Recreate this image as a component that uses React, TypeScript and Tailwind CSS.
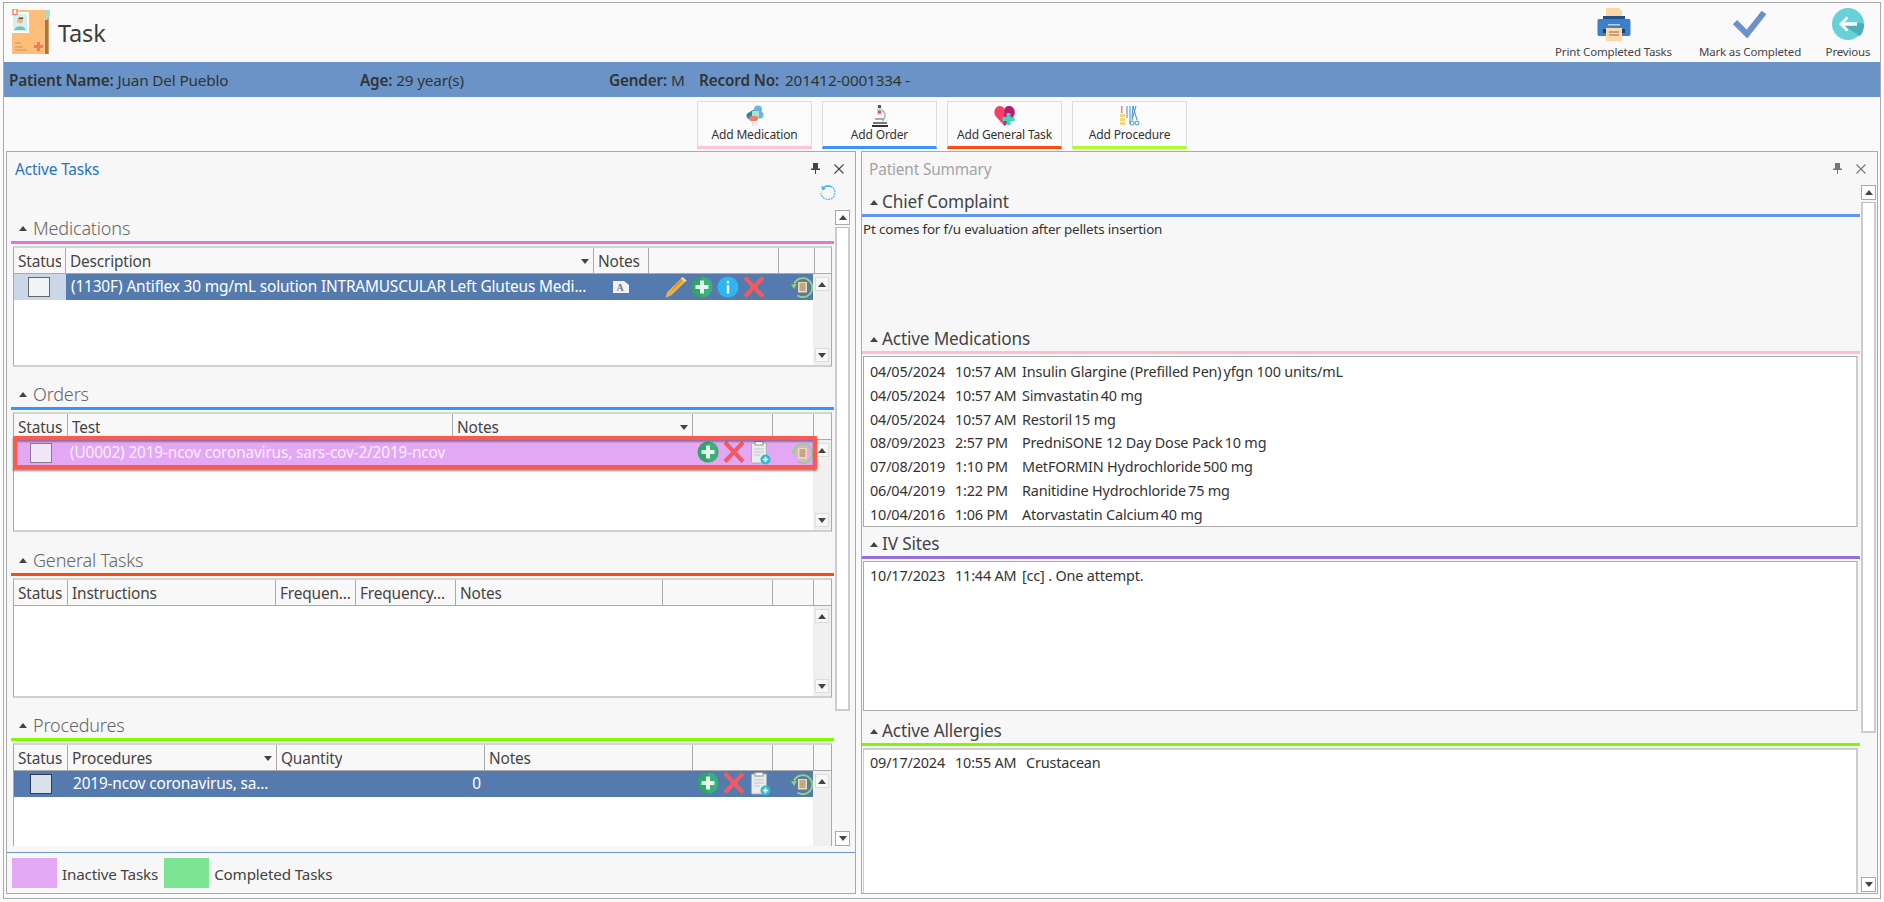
import React from 'react';

const Caret = ({ up = false }: { up?: boolean }) => (
  <svg width="8" height="5" viewBox="0 0 8 5" className="shrink-0">
    <path d={up ? 'M0 5 L4 0 L8 5 Z' : 'M0 0 L8 0 L4 5 Z'} fill="#444" />
  </svg>
);

const Plus = () => (
  <svg width="22" height="22" viewBox="0 0 22 22" className="shrink-0">
    <circle cx="11" cy="11" r="10.5" fill="#2fa56a" />
    <path d="M11 .5a10.5 10.5 0 0 1 0 21z" fill="#3cb07a" />
    <path d="M9 4.5h4V9h4.5v4H13v4.5H9V13H4.5V9H9z" fill="#e6f5ec" />
  </svg>
);

const Cross = () => (
  <svg width="22" height="22" viewBox="0 0 22 22" className="shrink-0">
    <path d="M2 1.5 L20 20.5 M20 1.5 L2 20.5" stroke="#f25a63" strokeWidth="4" />
  </svg>
);

const Pencil = () => (
  <svg width="22" height="22" viewBox="0 0 22 22" className="shrink-0">
    <path d="M17.5 1 L21.5 4.5 L6 19.5 L2 16.5 Z" fill="#f5b63c" />
    <path d="M10 9 L16 3 L18 5 L4 18 Z" fill="#e59a22" />
    <path d="M17.5 1 L21.5 4.5 L20 6 L16 2.5 Z" fill="#f0d9a8" />
    <path d="M2 16.5 L6 19.5 L0.5 21.8 Z" fill="#d9b48a" />
  </svg>
);

const Info = () => (
  <svg width="22" height="22" viewBox="0 0 22 22" className="shrink-0">
    <circle cx="11" cy="11" r="10.5" fill="#2fb5ef" />
    <rect x="9.8" y="9" width="2.4" height="8.5" fill="#fff" />
    <rect x="9.8" y="4.8" width="2.4" height="2.6" fill="#fff" />
  </svg>
);

const Clipboard = () => (
  <svg width="22" height="24" viewBox="0 0 22 24" className="shrink-0">
    <rect x="2.5" y="2" width="15" height="20" rx="1" fill="#e9ebec" stroke="#aab0b4" />
    <rect x="6" y="0.5" width="8" height="3.5" fill="#fff" stroke="#8f969a" />
    <path d="M5 8h10M5 11h10M5 14h6" stroke="#c3c8cb" strokeWidth="1.2" />
    <circle cx="16.5" cy="18.5" r="5" fill="#2fbdc5" />
    <path d="M16.5 15.8v5.4M13.8 18.5h5.4" stroke="#fff" strokeWidth="1.6" />
  </svg>
);

const History = () => (
  <svg width="22" height="22" viewBox="0 0 22 22" className="shrink-0">
    <path d="M3.2 7.5 A9.5 9.5 0 1 1 6.5 19.5" fill="none" stroke="#93d671" strokeWidth="1.8" />
    <path d="M0 8.5 L5.5 8 L3.2 13 Z" fill="#93d671" />
    <rect x="7" y="6" width="9" height="10.5" fill="#f2d9ae" />
    <path d="M8.5 8h6M8.5 10h6M8.5 12h6M8.5 14h6" stroke="#8c7a5a" strokeWidth="1" />
  </svg>
);

const NoteA = () => (
  <svg width="16" height="12" viewBox="0 0 16 12">
    <path d="M0 0 H11 L16 4 V12 H0 Z" fill="#f1f2f4" />
    <text x="7" y="10" textAnchor="middle" fontSize="10" fontFamily="Liberation Serif, serif" fontWeight="700" fill="#6d7a8c">A</text>
  </svg>
);

const Pin = ({ color }: { color: string }) => (
  <svg width="9" height="11" viewBox="0 0 9 11">
    <path d="M2 0h5v5.5h2V7H5v4H4V7H0V5.5h2z" fill={color} />
  </svg>
);

const Close = ({ color }: { color: string }) => (
  <svg width="10" height="10" viewBox="0 0 10 10">
    <path d="M.5 .5 L9.5 9.5 M9.5 .5 L.5 9.5" stroke={color} strokeWidth="1.1" />
  </svg>
);

const Refresh = () => (
  <svg width="16" height="16" viewBox="0 0 16 16">
    <path d="M3 2.6 A7 7 0 1 1 1 8" fill="none" stroke="#47b8ee" strokeWidth="1.2" strokeDasharray="2 .8" />
    <path d="M3.2 3 A7 7 0 0 1 11 2" fill="none" stroke="#47b8ee" strokeWidth="1.3" />
    <path d="M1.2 .8 L2 5.4 L6 3.8 Z" fill="#47b8ee" />
  </svg>
);

const TaskIcon = () => (
  <svg width="41" height="47" viewBox="0 0 41 47" className="shrink-0">
    <rect x="1" y="1" width="37" height="44" fill="#fcbe78" />
    <rect x="34" y="8" width="3.5" height="37" fill="#a8764a" />
    <path d="M34 1 H39 V7 L36 11 H34 Z" fill="#a2dcd8" />
    <rect x="0" y="3" width="18" height="21" fill="#fdfdfc" />
    <rect x="2" y="5" width="14" height="17" fill="#d5f0ee" />
    <circle cx="9" cy="11.5" r="3" fill="#e9b58a" />
    <path d="M8 8.5h4l.5 1.5h-5z" fill="#6a4a30" />
    <path d="M3.5 21 C4 16 14 16 14.5 21 Z" fill="#72c3c0" />
    <rect x="2" y="0" width="4" height="5.5" fill="#fff" stroke="#f0705a" strokeWidth="1.2" />
    <path d="M23 36 h3 v-3 h3 v3 h3 v3 h-3 v3 h-3 v-3 h-3 z" fill="#f47a5a" />
    <path d="M4 34h6M4 38h8M4 41h12" stroke="#c8985f" strokeWidth="1" />
  </svg>
);

const PrintIcon = () => (
  <svg width="34" height="33" viewBox="0 0 34 33">
    <path d="M9 0 H22 L25 3 V10 H9 Z" fill="#fdd7a8" />
    <rect x="6" y="8" width="22" height="5" fill="#1f5288" />
    <path d="M2 11 H32 Q33.5 11 33.5 13 V26 Q33.5 28 32 28 H2 Q.5 28 .5 26 V13 Q.5 11 2 11 Z" fill="#3f7fc6" />
    <rect x="6" y="21" width="22" height="4" fill="#1f3f66" />
    <rect x="11" y="16" width="12" height="1.5" fill="#b9d4ee" />
    <rect x="9" y="20" width="16" height="13" fill="#fdd7a8" />
    <path d="M12 24h10M12 27h10" stroke="#8a6a48" strokeWidth="1" />
  </svg>
);

const CheckIcon = () => (
  <svg width="34" height="28" viewBox="0 0 34 28">
    <path d="M2 12 L14 24 L31 2.5" fill="none" stroke="#6a92c9" strokeWidth="6" />
  </svg>
);

const BackIcon = () => (
  <svg width="32" height="32" viewBox="0 0 32 32">
    <circle cx="16" cy="16" r="16" fill="#68d0d9" />
    <path d="M9 16 L17 21 L28 28 A16 16 0 0 0 32 16 L29 15 H23 Z" fill="#4aafb9" />
    <path d="M14.5 8.5 L7 16 L14.5 23.5 L16.5 21.5 L12.5 17.8 H25 V14.2 H12.5 L16.5 10.5 Z" fill="#fff" />
  </svg>
);

const MedIcon = () => (
  <svg width="22" height="22" viewBox="0 0 22 22">
    <rect x="2" y="6" width="12" height="7" rx="3.5" fill="#2a8a98" transform="rotate(-30 8 9)" />
    <circle cx="14" cy="4.5" r="4" fill="#6eb2e6" />
    <circle cx="16" cy="10" r="3.5" fill="#6eb2e6" />
    <rect x="8" y="6" width="7" height="6" fill="#a8e0d6" />
    <rect x="5" y="11" width="9" height="5" rx="2.5" fill="#ee7d62" />
    <path d="M9 17v4M12 18v2" stroke="#c9c9c9" />
  </svg>
);

const MicroscopeIcon = () => (
  <svg width="16" height="22" viewBox="0 0 16 22">
    <rect x="6" y="0" width="3" height="4" fill="#555" />
    <rect x="5" y="3" width="5" height="7" fill="#d8d8d8" />
    <circle cx="7.5" cy="7" r="1.8" fill="#e05a4e" />
    <path d="M10 5 A6.5 6.5 0 0 1 10 16" fill="none" stroke="#b8b8b8" strokeWidth="1.5" />
    <rect x="3" y="13" width="9" height="2" fill="#aaa" />
    <rect x="1" y="17" width="14" height="2" fill="#777" />
    <rect x="0" y="20" width="16" height="2" fill="#333" />
  </svg>
);

const HeartIcon = () => (
  <svg width="21" height="21" viewBox="0 0 21 21">
    <path d="M10.5 20 L1.5 10 C-1.5 5 2 0 6 0 C8 0 9.5 1 10.5 3 C11.5 1 13 0 15 0 C19 0 22.5 5 19.5 10 Z" fill="#f4416c" />
    <path d="M10.5 3 C11.5 1 13 0 15 0 C19 0 22.5 5 19.5 10 L10.5 20 Z" fill="#b81e6e" />
    <path d="M12.5 7h4v4h4v4h-4v4h-4v-4h-4v-4h4z" fill="#3fd6c4" />
  </svg>
);

const ProcedureIcon = () => (
  <svg width="20" height="21" viewBox="0 0 20 21">
    <rect x="1" y="0" width="1.5" height="7" fill="#f0818a" />
    <rect x="0" y="8" width="5" height="3" fill="#f4d67a" />
    <rect x="0" y="12" width="5" height="3" fill="#f4d67a" />
    <rect x="0" y="16" width="5" height="3" fill="#f4d67a" />
    <path d="M7 0v12M10 0v18M13 0l-1 12" stroke="#3f8fd0" strokeWidth="1" fill="none" />
    <path d="M16 0 L12 14 M13 0 L17 14" stroke="#3f8fd0" strokeWidth="1" />
    <circle cx="12" cy="17" r="2" fill="none" stroke="#3f8fd0" />
    <circle cx="17" cy="17" r="2" fill="none" stroke="#3f8fd0" />
  </svg>
);

const ScrollBtn = ({ up, cls }: { up?: boolean; cls: string }) => (
  <div className={`flex shrink-0 items-center justify-center ${cls}`}>
    <Caret up={up} />
  </div>
);

// scrollbar that sits inside each grid body
const GridScroll = () => (
  <div className="flex w-[18px] shrink-0 flex-col items-center justify-between bg-[#f0f0f0] px-[2px] py-[3px]">
    <ScrollBtn up cls="h-[14px] w-[14px] border border-[#dcdcdc] bg-[#f7f7f7]" />
    <ScrollBtn cls="h-[14px] w-[14px] border border-[#dcdcdc] bg-[#f7f7f7]" />
  </div>
);

type Col = { label?: string; w: string; sort?: boolean };

const Grid = ({ cols, h, children }: { cols: Col[]; h: string; children?: React.ReactNode }) => (
  <div className={`flex flex-col border-x border-t-2 border-b-2 border-x-[#aaa] border-t-[#d4d4d4] border-b-[#d0d0d0] ${h}`}>
    <div className="flex h-[26px] shrink-0 border-b border-[#aaa] bg-[#f8f8f8] text-[15.4px] text-[#444]">
      {cols.map((c, i) => (
        <div key={i} className={`flex items-center justify-between border-r border-[#aaa] pl-[4px] pr-[4px] pt-[2px] last:border-r-0 ${c.w}`}>
          <span className="overflow-hidden whitespace-nowrap">{c.label}</span>
          {c.sort && <Caret />}
        </div>
      ))}
    </div>
    <div className="flex min-h-0 flex-1 bg-white">
      <div className="relative min-w-0 flex-1">{children}</div>
      <GridScroll />
    </div>
  </div>
);

const Checkbox = ({ cls }: { cls: string }) => <div className={`h-[20px] w-[22px] border ${cls}`} />;

const Heading = ({ text, tone, line, size, gap }: { text: string; tone: string; line: string; size: string; gap: string }) => (
  <>
    <div className={`flex h-[26px] items-center pl-[8px] pt-[2px] leading-none ${tone} ${size}`}>
      <span className={`inline-flex ${gap}`}>
        <Caret up />
      </span>
      {text}
    </div>
    <div className={`h-[3px] ${line}`} />
  </>
);

const PanelTitle = ({ text, tone, iconTone, right, left }: { text: string; tone: string; iconTone: string; right: string; left: string }) => (
  <div className={`flex h-[33px] shrink-0 items-center justify-between ${left} ${right}`}>
    <span className={`pt-[2px] text-[15.4px] ${tone}`}>{text}</span>
    <div className="flex items-center gap-[14px]">
      <Pin color={iconTone} />
      <Close color={iconTone} />
    </div>
  </div>
);

const OuterScroll = ({ cls, thumb }: { cls: string; thumb: string }) => (
  <div className={`flex w-[15px] shrink-0 flex-col ${cls}`}>
    <ScrollBtn up cls="h-[15px] border border-[#aaa] bg-white" />
    <div className={`mt-[2px] border-x-2 border-b-2 border-t border-x-[#ccc] border-b-[#ccc] border-t-[#bbb] bg-white ${thumb}`} />
    <div className="flex-1" />
    <ScrollBtn cls="h-[15px] border border-[#aaa] bg-white" />
  </div>
);

const SummaryRow = ({ date, time, name, dose }: { date: string; time: string; name: string; dose?: string }) => (
  <div className="flex h-[23.8px] items-center pl-[6px]">
    <span className="w-[85px]">{date}</span>
    <span className="w-[67px]">{time}</span>
    <span>{name}</span>
    {dose && <span className="ml-[2px]">{dose}</span>}
  </div>
);

const medications = [
  ['04/05/2024', '10:57 AM', 'Insulin Glargine (Prefilled Pen)', 'yfgn 100 units/mL'],
  ['04/05/2024', '10:57 AM', 'Simvastatin', '40 mg'],
  ['04/05/2024', '10:57 AM', 'Restoril', '15 mg'],
  ['08/09/2023', '2:57 PM', 'PredniSONE 12 Day Dose Pack', '10 mg'],
  ['07/08/2019', '1:10 PM', 'MetFORMIN Hydrochloride', '500 mg'],
  ['06/04/2019', '1:22 PM', 'Ranitidine Hydrochloride', '75 mg'],
  ['10/04/2016', '1:06 PM', 'Atorvastatin Calcium', '40 mg'],
];

const ToolButton = ({ label, line, icon }: { label: string; line: string; icon: React.ReactNode }) => (
  <div className={`flex h-[48px] w-[115px] flex-col items-center border-x border-t border-b-[3px] border-x-[#ddd] border-t-[#ddd] bg-[#fbfbfb] pt-[3px] ${line}`}>
    <div className="flex h-[22px] items-center justify-center">{icon}</div>
    <span className="mt-[1px] text-[12px] leading-[14px] text-[#333]">{label}</span>
  </div>
);

const HeaderAction = ({ label, w, icon }: { label: string; w: string; icon: React.ReactNode }) => (
  <div className={`flex flex-col items-center ${w}`}>
    <div className="flex h-[34px] items-center">{icon}</div>
    <span className="mt-[3px] whitespace-nowrap text-[11.5px] leading-[16px] text-[#444]">{label}</span>
  </div>
);

export default function App() {
  return (
    <div className="h-[902px] w-[1884px] overflow-hidden bg-[#fafafa] pl-[3px] pt-[2px] font-['Noto_Sans',sans-serif] tracking-[-0.01em] text-[#333]">
      <div className="flex h-[897px] w-[1878px] flex-col border border-[#aaa] bg-[#fafafa]">
        {/* Title bar */}
        <div className="flex h-[59px] shrink-0 items-start justify-between pl-[7px]">
          <div className="flex items-center pt-[6px]">
            <TaskIcon />
            <span className="ml-[6px] pt-[2px] text-[23.5px] leading-none text-[#3c3c3c]">Task</span>
          </div>
          <div className="flex pr-[7px] pt-[4px]">
            <HeaderAction label="Print Completed Tasks" w="w-[125px]" icon={<PrintIcon />} />
            <HeaderAction label="Mark as Completed" w="w-[118px] ml-[15px]" icon={<CheckIcon />} />
            <HeaderAction label="Previous" w="w-[50px] ml-[14px]" icon={<BackIcon />} />
          </div>
        </div>

        {/* Patient bar */}
        <div className="flex h-[35px] shrink-0 items-center bg-[#6a93c7] pt-[1px] text-[15.3px] text-[#333]">
          <div className="w-[356px] pl-[5px]"><b className="font-semibold">Patient Name:</b> Juan Del Pueblo</div>
          <div className="w-[249px]"><b className="font-semibold">Age:</b> 29 year(s)</div>
          <div className="w-[90px]"><b className="font-semibold">Gender:</b> M</div>
          <div><b className="font-semibold">Record No:</b><span className="ml-[6px]">201412-0001334 -</span></div>
        </div>

        {/* Add buttons */}
        <div className="flex h-[54px] shrink-0 justify-center gap-[10px] pt-[4px]">
          <ToolButton label="Add Medication" line="border-b-[#fcc5d0]" icon={<MedIcon />} />
          <ToolButton label="Add Order" line="border-b-[#3a94fa]" icon={<MicroscopeIcon />} />
          <ToolButton label="Add General Task" line="border-b-[#fb4d0f]" icon={<HeartIcon />} />
          <ToolButton label="Add Procedure" line="border-b-[#adfb2f]" icon={<ProcedureIcon />} />
        </div>

        <div className="flex min-h-0 flex-1 gap-[5px] pb-[4px] pl-[2px]">
          {/* Active Tasks */}
          <div className="flex w-[850px] shrink-0 flex-col border border-[#aaa] bg-[#f7f7f7]">
            <PanelTitle text="Active Tasks" tone="text-[#1f73c4]" iconTone="#444" left="pl-[8px]" right="pr-[11px]" />
            <div className="flex h-[16px] shrink-0 justify-end pr-[19px]"><Refresh /></div>
            <div className="flex min-h-0 flex-1 pl-[4px] pr-[5px]">
              <div className="flex min-w-0 flex-1 flex-col pt-[14px]">
                <div className="h-[166px] shrink-0">
                  <Heading text="Medications" tone="pb-[2px] text-[#666] font-light" size="text-[18px]" gap="mr-[6px]" line="bg-[#e077dd]" />
                  <div className="px-[2px] pt-[2px]">
                    <Grid
                      h="h-[121px]"
                      cols={[
                        { label: 'Status', w: 'w-[52px]' },
                        { label: 'Description', w: 'w-[528px]', sort: true },
                        { label: 'Notes', w: 'w-[55px]' },
                        { w: 'w-[130px]' },
                        { w: 'w-[36px]' },
                        { w: 'flex-1' },
                      ]}
                    >
                      <div className="flex h-[26px] items-center bg-[#557bae] text-[15.4px] text-white">
                        <div className="flex h-full w-[52px] items-center justify-center bg-[#c9d7e6] pr-[2px]">
                          <Checkbox cls="border-[#666] bg-[#f3f4f7]" />
                        </div>
                        <div className="w-[528px] overflow-hidden whitespace-nowrap pl-[5px]">(1130F) Antiflex 30 mg/mL solution INTRAMUSCULAR Left Gluteus Medi...</div>
                        <div className="flex w-[55px] justify-center"><NoteA /></div>
                        <div className="flex w-[130px] gap-[4px] pl-[17px]"><Pencil /><Plus /><Info /><Cross /></div>
                        <div className="w-[35px] pl-[13px]"><History /></div>
                      </div>
                    </Grid>
                  </div>
                </div>

                <div className="h-[166px] shrink-0">
                  <Heading text="Orders" tone="pb-[2px] text-[#666] font-light" size="text-[18px]" gap="mr-[6px]" line="bg-[#3a94fa]" />
                  <div className="px-[2px] pt-[2px]">
                    <Grid
                      h="h-[120px]"
                      cols={[
                        { label: 'Status', w: 'w-[54px]' },
                        { label: 'Test', w: 'w-[385px]' },
                        { label: 'Notes', w: 'w-[240px]', sort: true },
                        { w: 'w-[80px]' },
                        { w: 'w-[41px]' },
                        { w: 'flex-1' },
                      ]}
                    >
                      <div className="flex h-[26px] items-center bg-[#e3a8f3] text-[15.4px] text-[#fbeffd]">
                        <div className="flex w-[54px] justify-center">
                          <Checkbox cls="border-[#8d7b96] bg-[#f4e6f9]" />
                        </div>
                        <div className="w-[385px] overflow-hidden whitespace-nowrap pl-[2px]">(U0002) 2019-ncov coronavirus, sars-cov-2/2019-ncov</div>
                        <div className="w-[240px]" />
                        <div className="flex w-[80px] gap-[4px] pl-[4px]"><Plus /><Cross /><Clipboard /></div>
                        <div className="w-[40px] pl-[18px]"><History /></div>
                      </div>
                      {/* red selection box over the inactive row */}
                      <div className="absolute left-[-1px] top-[-4px] h-[33px] w-[804px] border-4 border-[#fb5a50] shadow-[0_2px_2px_rgba(0,0,0,0.45),inset_0_2px_2px_rgba(0,0,0,0.35)]" />
                    </Grid>
                  </div>
                </div>

                <div className="h-[165px] shrink-0">
                  <Heading text="General Tasks" tone="pb-[2px] text-[#666] font-light" size="text-[18px]" gap="mr-[6px]" line="bg-[#fb4d0f]" />
                  <div className="px-[2px] pt-[2px]">
                    <Grid
                      h="h-[120px]"
                      cols={[
                        { label: 'Status', w: 'w-[54px]' },
                        { label: 'Instructions', w: 'w-[208px]' },
                        { label: 'Frequen...', w: 'w-[80px]' },
                        { label: 'Frequency...', w: 'w-[100px]' },
                        { label: 'Notes', w: 'w-[207px]' },
                        { w: 'w-[110px]' },
                        { w: 'w-[41px]' },
                        { w: 'flex-1' },
                      ]}
                    />
                  </div>
                </div>

                <div className="mb-[6px] min-h-0 flex-1 overflow-hidden">
                  <Heading text="Procedures" tone="pb-[2px] text-[#666] font-light" size="text-[18px]" gap="mr-[6px]" line="bg-[#7dfb00]" />
                  <div className="px-[2px] pt-[2px]">
                    <Grid
                      h="h-[140px]"
                      cols={[
                        { label: 'Status', w: 'w-[54px]' },
                        { label: 'Procedures', w: 'w-[209px]', sort: true },
                        { label: 'Quantity', w: 'w-[208px]' },
                        { label: 'Notes', w: 'w-[208px]' },
                        { w: 'w-[80px]' },
                        { w: 'w-[41px]' },
                        { w: 'flex-1' },
                      ]}
                    >
                      <div className="flex h-[26px] items-center bg-[#557bae] text-[15.4px] text-white">
                        <div className="flex w-[54px] justify-center">
                          <Checkbox cls="border-[#333d55] bg-[#dbe1ea]" />
                        </div>
                        <div className="w-[209px] overflow-hidden whitespace-nowrap pl-[5px]">2019-ncov coronavirus, sa...</div>
                        <div className="w-[208px] pr-[4px] text-right">0</div>
                        <div className="w-[208px]" />
                        <div className="flex w-[80px] gap-[4px] pl-[4px]"><Plus /><Cross /><Clipboard /></div>
                        <div className="w-[40px] pl-[18px]"><History /></div>
                      </div>
                    </Grid>
                  </div>
                </div>
              </div>
              <OuterScroll cls="ml-[1px] mt-[9px] mb-[6px]" thumb="h-[484px]" />
            </div>
            <div className="flex h-[41px] shrink-0 items-center border-t border-[#6b93c7] pl-[5px] text-[15.2px] text-[#444]">
              <div className="h-[30px] w-[45px] bg-[#e3a8f3]" />
              <span className="ml-[5px] pt-[3px]">Inactive Tasks</span>
              <div className="ml-[6px] h-[30px] w-[45px] bg-[#7be495]" />
              <span className="ml-[5px] pt-[3px]">Completed Tasks</span>
            </div>
          </div>

          {/* Patient Summary */}
          <div className="flex w-[1017px] shrink-0 flex-col border border-[#aaa] bg-[#f7f7f7]">
            <PanelTitle text="Patient Summary" tone="text-[#a3a3a3]" iconTone="#777" left="pl-[7px]" right="pr-[11px]" />
            <div className="flex min-h-0 flex-1">
              <div className="flex min-w-0 flex-1 flex-col pt-[3px] text-[14.4px]">
                <Heading text="Chief Complaint" tone="text-[#444]" size="text-[17.2px]" gap="mr-[4px]" line="bg-[#6495ed]" />
                <div className="h-[108px] shrink-0 pl-[1px] pt-[2px] text-[13.4px] leading-[20px]">Pt comes for f/u evaluation after pellets insertion</div>

                <Heading text="Active Medications" tone="text-[#444]" size="text-[17.2px]" gap="mr-[4px]" line="bg-[#fcc0cd]" />
                <div className="ml-[1px] mr-[2px] mt-[2px] h-[171px] shrink-0 border border-r-2 border-[#aaa] border-r-[#ccc] bg-white pt-[3px]">
                  {medications.map((m, i) => (
                    <SummaryRow key={i} date={m[0]} time={m[1]} name={m[2]} dose={m[3]} />
                  ))}
                </div>

                <div className="mt-[3px]">
                  <Heading text="IV Sites" tone="text-[#444]" size="text-[17.2px]" gap="mr-[4px]" line="bg-[#9370db]" />
                </div>
                <div className="ml-[1px] mr-[2px] mt-[2px] h-[150px] shrink-0 border border-r-2 border-[#aaa] border-r-[#ccc] bg-white py-[2px]">
                  <SummaryRow date="10/17/2023" time="11:44 AM" name="[cc] . One attempt." />
                </div>

                <div className="mt-[6px]">
                  <Heading text="Active Allergies" tone="text-[#444]" size="text-[17.2px]" gap="mr-[4px]" line="bg-[#7dfb00]" />
                </div>
                <div className="ml-[1px] mr-[2px] mt-[2px] min-h-0 flex-1 border-l border-r-2 border-t-2 border-l-[#ccc] border-r-[#ccc] border-t-[#ccc] bg-white pt-[1px]">
                  <div className="flex h-[24px] items-center pl-[6px]">
                    <span className="w-[85px]">09/17/2024</span>
                    <span className="w-[71px]">10:55 AM</span>
                    <span>Crustacean</span>
                  </div>
                </div>
              </div>
              <OuterScroll cls="mb-[1px] ml-[1px] mr-[1px]" thumb="h-[531px]" />
            </div>
          </div>
        </div>
      </div>
    </div>
  );
}
